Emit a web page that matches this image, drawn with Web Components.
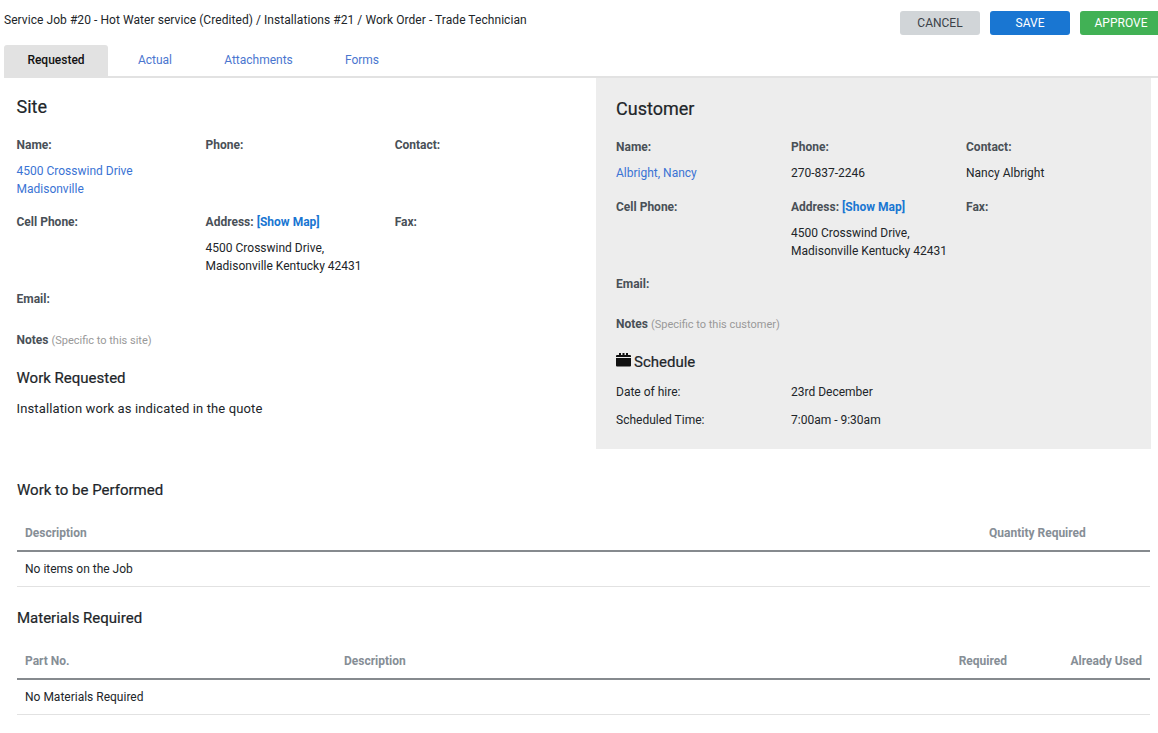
<!DOCTYPE html>
<html><head><meta charset="utf-8"><style>
html,body{margin:0;padding:0;background:#fff;font-family:Roboto,sans-serif;color:#212529;}
body{width:1158px;height:733px;overflow:hidden}
</style></head><body>
<wo-page></wo-page>
<template id="page"><style>
:host{display:block;font:12px/18px Roboto,sans-serif;color:#212529}
.top{display:flex;justify-content:space-between;align-items:flex-start;padding:11px 0 0 4px;height:34px;margin-right:-2px}
.crumb{font-size:12px;line-height:18px;letter-spacing:.06px}
.btns{display:flex;gap:10px}
wo-tabs{margin-left:4px}
.cols{display:flex;align-items:flex-start}
.left{width:563.5px;padding:18px 0 0 16.5px;box-sizing:content-box}
.right{width:555px;height:371px;margin-left:16px;background:#ededed;box-sizing:border-box;padding:20px 0 0 20px}
h2{font:400 18px/22px Roboto,sans-serif;margin:0;color:#212529;-webkit-text-stroke:.2px #212529}
h3{font:400 15px/20px Roboto,sans-serif;margin:0;color:#212529;-webkit-text-stroke:.2px #212529}
.lower{padding:0 8px 0 17px}
.muted{color:#999;font-size:11px}
.notes{font-weight:700;color:#495057}
.a{color:#3a73d4}
.sched{display:grid;grid-template-columns:175px 1fr;row-gap:10px;margin-top:11px}
.schedh{display:flex;align-items:center;gap:3px;margin-top:18px}
.schedh svg{display:block;margin-top:-4px}
p.wr{margin:11px 0 0;font-size:13px;letter-spacing:.13px;line-height:20px}
</style>
<div class="top"><div class="crumb">Service Job #20 - Hot Water service (Credited) / Installations #21 / Work Order - Trade Technician</div>
<div class="btns"><wo-btn kind="grey">CANCEL</wo-btn><wo-btn kind="blue">SAVE</wo-btn><wo-btn kind="green">APPROVE</wo-btn></div></div>
<wo-tabs></wo-tabs>
<div class="cols">
<section class="left"><h2>Site</h2>
<wo-fields style="--w:189.1px;margin-top:18px">
<wo-field label="Name:"><span class="a">4500 Crosswind Drive<br>Madisonville</span></wo-field>
<wo-field label="Phone:"></wo-field>
<wo-field label="Contact:"></wo-field>
<wo-field label="Cell Phone:"></wo-field>
<wo-field label="Address:" map>4500 Crosswind Drive,<br>Madisonville Kentucky 42431</wo-field>
<wo-field label="Fax:"></wo-field>
<wo-field label="Email:"></wo-field>
</wo-fields>
<div><span class="notes">Notes</span> <span class="muted">(Specific to this site)</span></div>
<h3 style="margin-top:18px">Work Requested</h3>
<p class="wr">Installation work as indicated in the quote</p>
</section>
<section class="right"><h2>Customer</h2>
<wo-fields style="--w:175px;margin-top:18px">
<wo-field class="r1" label="Name:"><span class="a">Albright, Nancy</span></wo-field>
<wo-field class="r1" label="Phone:">270-837-2246</wo-field>
<wo-field class="r1" label="Contact:">Nancy Albright</wo-field>
<wo-field label="Cell Phone:"></wo-field>
<wo-field label="Address:" map>4500 Crosswind Drive,<br>Madisonville Kentucky 42431</wo-field>
<wo-field label="Fax:"></wo-field>
<wo-field class="r0" label="Email:"></wo-field>
</wo-fields>
<div><span class="notes">Notes</span> <span class="muted">(Specific to this customer)</span></div>
<div class="schedh"><svg width="15" height="14" viewBox="0 0 15 14"><path fill="#111" d="M0 5h15v7.5a1 1 0 0 1-1 1H1a1 1 0 0 1-1-1zM1 2h2V0h2v2h1.5V0h2v2H10V0h2v2h2a1 1 0 0 1 1 1v1H0V3a1 1 0 0 1 1-1z"/></svg><h3>Schedule</h3></div>
<div class="sched"><span>Date of hire:</span><span>23rd December</span><span>Scheduled Time:</span><span>7:00am - 9:30am</span></div>
</section></div>
<div class="lower">
<h3 style="margin-top:31px">Work to be Performed</h3>
<wo-table style="margin-top:16px" cols="964px 1fr" heads="Description|Quantity Required" rows="No items on the Job" end="0"></wo-table>
<h3 style="margin-top:21px">Materials Required</h3>
<wo-table style="margin-top:16px" cols="319px 1fr 120px 135px" heads="Part No.|Description|Required|Already Used" rows="No Materials Required" end="2"></wo-table>
</div></template>

<script>
const def=(n,css,html)=>{customElements.define(n,class extends HTMLElement{connectedCallback(){if(this.shadowRoot)return;const r=this.attachShadow({mode:'open'});r.innerHTML='<style>'+css+'</style>'+(typeof html==='function'?html(this):html);}});};
def('wo-btn',`:host{display:block;width:80px;height:24px;border-radius:3px;font:400 12px/24px Roboto,sans-serif;text-align:center;box-sizing:border-box}
:host([kind=grey]){background:#d1d5d8;color:#3b4248}:host([kind=blue]){background:#1976d2;color:#fff}:host([kind=green]){background:#41b155;color:#fff;padding-left:2px}`,'<slot></slot>');
def('wo-tabs',`:host{display:flex;border-bottom:2px solid #e2e2e2;font:12px/33px Roboto,sans-serif;color:#4a76cf;box-sizing:content-box;height:31px}
.t{width:104px;text-align:center;height:33px;line-height:31px}.on{background:#e2e2e2;color:#111;font-weight:500;border-radius:3px 3px 0 0}`,
`<div class="t on">Requested</div><div class="t" style="width:94px">Actual</div><div class="t" style="width:113px">Attachments</div><div class="t" style="width:94px">Forms</div>`);
def('wo-fields',`:host{display:grid;grid-template-columns:repeat(3,var(--w))}`,'<slot></slot>');
def('wo-field',`:host{display:block;padding-bottom:15px;font:12px/18px Roboto,sans-serif}
:host(.r1){padding-bottom:16px}:host(.r0){padding-bottom:14px}
.l{font-weight:700;color:#495057;margin-bottom:8px}.m{color:#1976d2}`,
e=>`<div class="l">${e.getAttribute('label')}${e.hasAttribute('map')?' <span class="m">[Show Map]</span>':''}</div><slot></slot>`);
def('wo-table',`:host{display:block;font:12px/18px Roboto,sans-serif}
.r{display:grid;padding:0 8px}.h{border-bottom:2px solid #868a8e;font-weight:700;color:#868e96;height:36px;align-items:center;box-sizing:border-box}
.b{height:35px;line-height:35px;border-bottom:1px solid #e2e2e2;padding:0 8px;box-sizing:border-box}.e{text-align:right}`,
e=>{const hs=e.getAttribute('heads').split('|'),n=hs.length;const end=+(e.getAttribute('end')||0);return `<div class="r h" style="grid-template-columns:${e.getAttribute('cols')}">${hs.map((h,i)=>`<span class="${i>=n-end?'e':''}">${h}</span>`).join('')}</div><div class="b">${e.getAttribute('rows')}</div>`});
customElements.define('wo-page',class extends HTMLElement{connectedCallback(){if(this.shadowRoot)return;this.attachShadow({mode:'open'}).appendChild(document.getElementById('page').content.cloneNode(true));}});
</script></body></html>
